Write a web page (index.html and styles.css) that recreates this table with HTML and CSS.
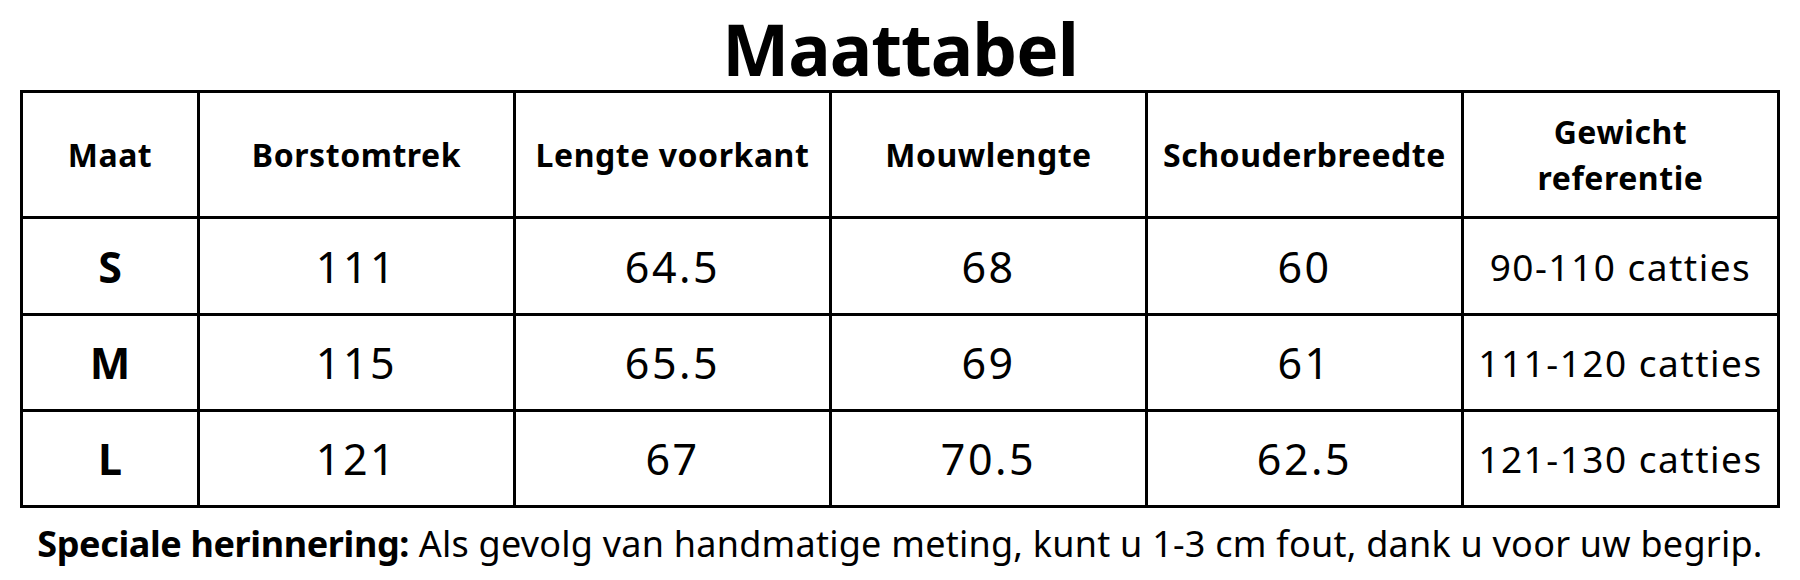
FILE: index.html
```html
<!DOCTYPE html>
<html lang="nl">
<head>
<meta charset="utf-8">
<title>Maattabel</title>
<link rel="stylesheet" href="styles.css">
</head>
<body>
<main class="page">
  <h1 class="title">Maattabel</h1>
  <div class="chart" role="table">
    <div class="cell head">Maat</div>
    <div class="cell head">Borstomtrek</div>
    <div class="cell head">Lengte voorkant</div>
    <div class="cell head">Mouwlengte</div>
    <div class="cell head">Schouderbreedte</div>
    <div class="cell head">Gewicht<br>referentie</div>

    <div class="cell size">S</div>
    <div class="cell num">111</div>
    <div class="cell num">64.5</div>
    <div class="cell num">68</div>
    <div class="cell num">60</div>
    <div class="cell weight">90-110 catties</div>

    <div class="cell size">M</div>
    <div class="cell num">115</div>
    <div class="cell num">65.5</div>
    <div class="cell num">69</div>
    <div class="cell num">61</div>
    <div class="cell weight">111-120 catties</div>

    <div class="cell size">L</div>
    <div class="cell num">121</div>
    <div class="cell num">67</div>
    <div class="cell num">70.5</div>
    <div class="cell num">62.5</div>
    <div class="cell weight">121-130 catties</div>
  </div>
  <p class="note"><strong>Speciale herinnering:</strong> Als gevolg van handmatige meting, kunt u 1-3 cm fout, dank u voor uw begrip.</p>
</main>
</body>
</html>
```

FILE: styles.css
```css
html, body {
  margin: 0;
  padding: 0;
  background: #ffffff;
}

body {
  font-family: "Noto Sans", "Open Sans", sans-serif;
  color: #000000;
}

.page {
  width: 1800px;
}

.title {
  margin: 0;
  padding: 13px 0 6px;
  line-height: 71px;
  font-size: 71px;
  font-weight: 700;
  text-align: center;
  letter-spacing: -1px;
}

.chart {
  margin-left: 20px;
  width: 1760px;
  box-sizing: border-box;
  border-top: 3px solid #000;
  border-left: 3px solid #000;
  display: grid;
  grid-template-columns: 177px repeat(5, 316px);
  grid-template-rows: 126px 97px 96px 96px;
}

.cell {
  box-sizing: border-box;
  border-right: 3px solid #000;
  border-bottom: 3px solid #000;
  display: flex;
  align-items: center;
  justify-content: center;
  text-align: center;
}

.head {
  font-size: 32px;
  font-weight: 700;
  line-height: 46px;
  letter-spacing: 0.55px;
}

.size {
  font-size: 43px;
  font-weight: 700;
}

.num {
  font-size: 43px;
  font-weight: 400;
  letter-spacing: 2.5px;
}

.weight {
  font-size: 37px;
  font-weight: 400;
  letter-spacing: 1.5px;
}

.note {
  margin: 11px 0 0;
  line-height: 50px;
  font-size: 36px;
  text-align: center;
  white-space: nowrap;
  letter-spacing: 0.24px;
}

.note strong {
  font-weight: 700;
  letter-spacing: -0.38px;
}
```
